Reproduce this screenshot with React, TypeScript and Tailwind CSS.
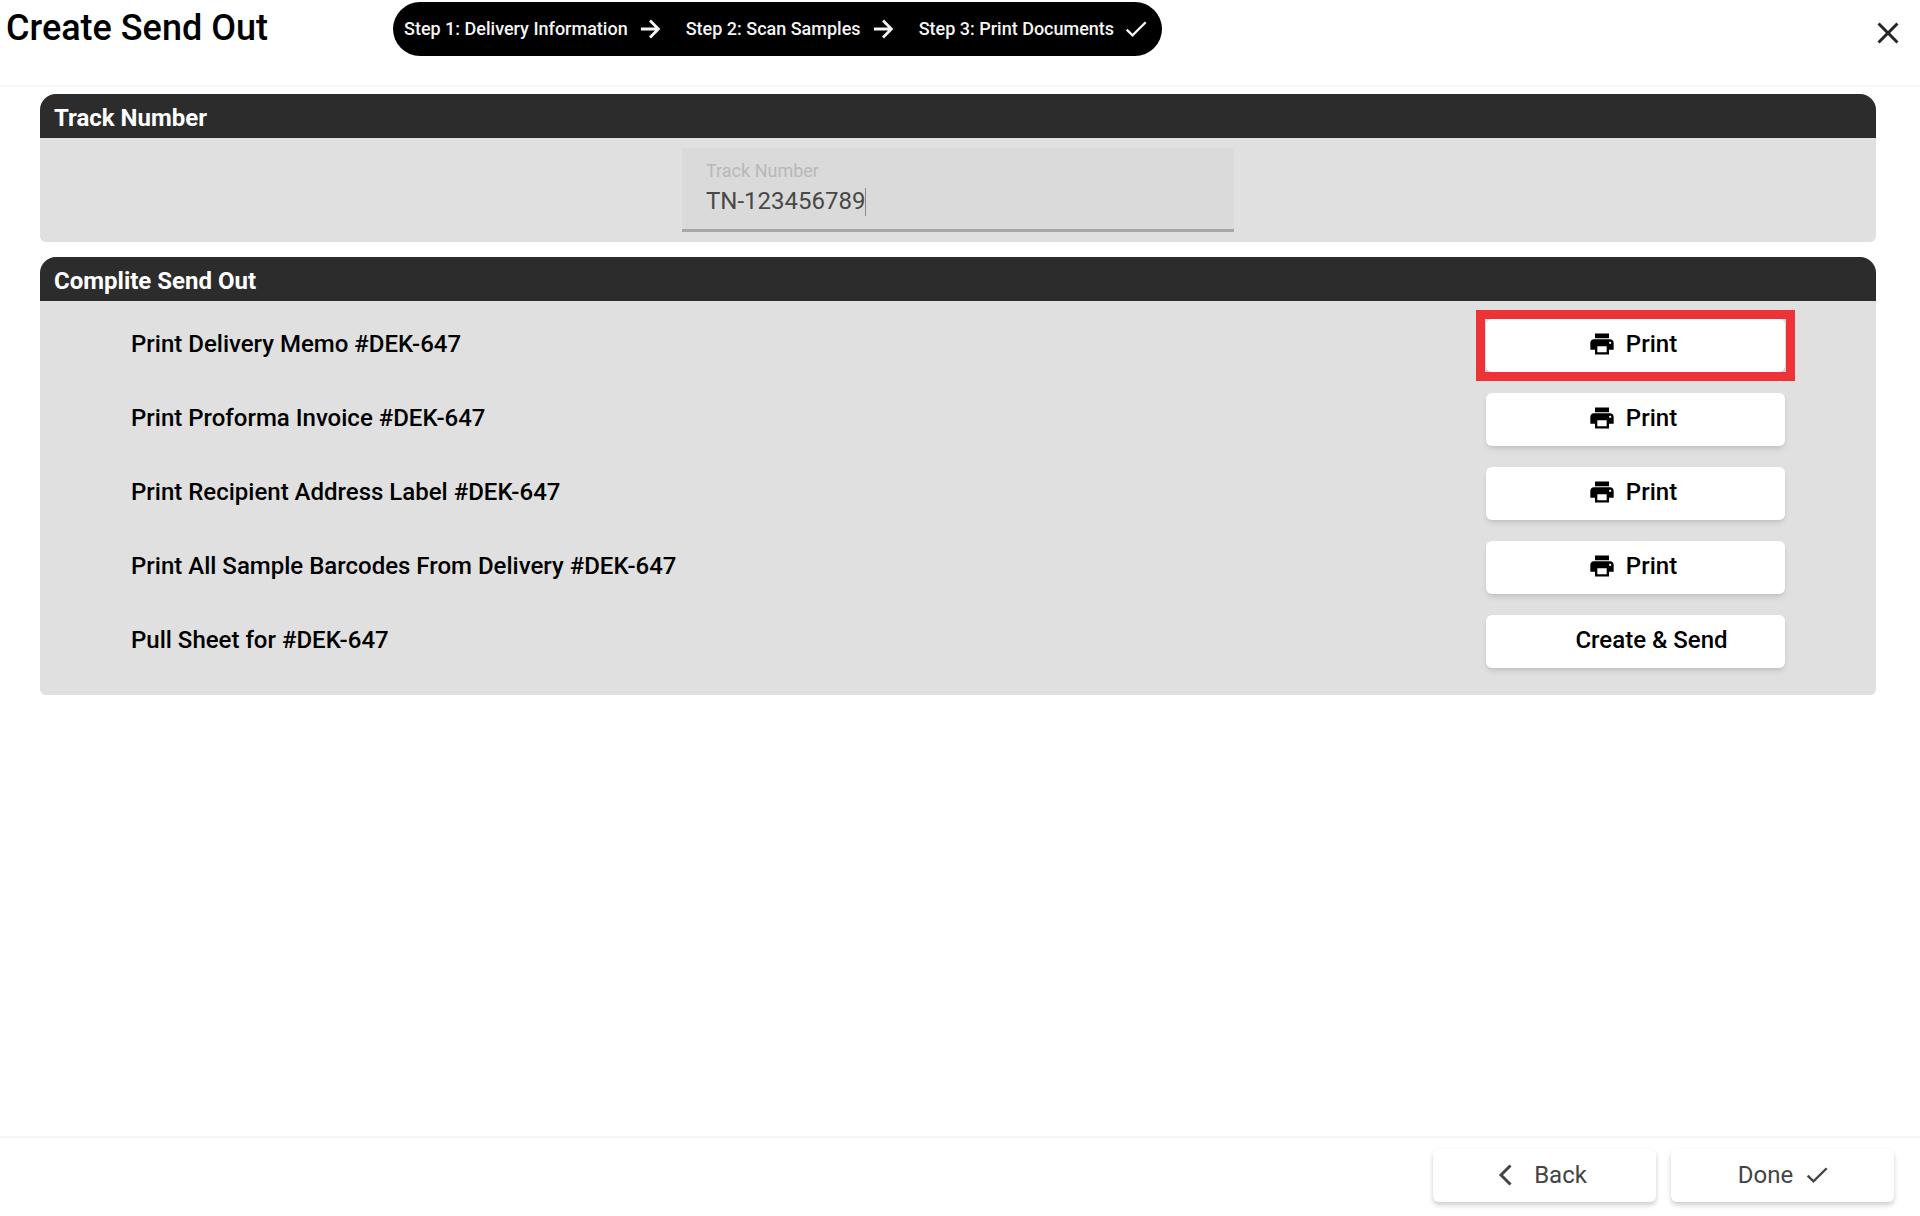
import { MdClose, MdPrint } from "react-icons/md";

const steps = [
    { label: "Step 1: Delivery Information", done: false },
    { label: "Step 2: Scan Samples", done: false },
    { label: "Step 3: Print Documents", done: true },
];

const documents = [
    { label: "Print Delivery Memo #DEK-647", action: "Print", active: true },
    { label: "Print Proforma Invoice #DEK-647", action: "Print" },
    { label: "Print Recipient Address Label #DEK-647", action: "Print" },
    { label: "Print All Sample Barcodes From Delivery #DEK-647", action: "Print" },
    { label: "Pull Sheet for #DEK-647", action: "Create & Send" },
];

const iconPaths = {
    arrow: "M4.2 12H19M12 4.8l7.2 7.2-7.2 7.2",
    check: "M4 12.5l5 5L20.3 6.2",
    back: "M14.5 2.5L5 12l9.5 9.5",
};

function Icon({ name, className }: { name: keyof typeof iconPaths; className: string }) {
    return (
        <svg viewBox="0 0 24 24" fill="none" stroke="currentColor" className={className} aria-hidden="true">
            <path d={iconPaths[name]} />
        </svg>
    );
}

function Header() {
    return (
        <header className="flex h-[87px] items-start border-b-2 border-neutral-100">
            <h1 className="w-[393px] shrink-0 pt-1 pl-[6px] text-4xl leading-12 font-medium">Create Send Out</h1>
            <ol className="mt-[2px] flex h-[54px] items-center rounded-full bg-black pr-3 pl-[11px] text-lg font-medium text-neutral-100">
                {steps.map((step) => (
                    <li key={step.label} className="flex items-center">
                        <span className="whitespace-nowrap">{step.label}</span>
                        {step.done ? (
                            <Icon name="check" className="ml-2 size-7 stroke-2" />
                        ) : (
                            <Icon name="arrow" className="mr-[22px] ml-2 size-7 stroke-[2.4]" />
                        )}
                    </li>
                ))}
            </ol>
            <button aria-label="Close" className="mt-[15px] mr-[14px] ml-auto text-neutral-800">
                <MdClose className="size-9" />
            </button>
        </header>
    );
}

function Card({ title, children }: { title: string; children: React.ReactNode }) {
    return (
        <section className="overflow-hidden rounded-t-2xl rounded-b-md bg-[#e0e0e0]">
            <h2 className="h-11 bg-[#2c2c2c] pl-[14px] text-2xl leading-12 font-bold text-white">{title}</h2>
            {children}
        </section>
    );
}

function DocumentRow({ label, action, active }: { label: string; action: string; active?: boolean }) {
    return (
        <li className="flex h-[53px] items-center justify-between">
            <span className="pb-1 text-2xl font-medium">{label}</span>
            <div className="relative">
                <button className="flex h-[53px] w-[299px] items-center justify-center rounded-md bg-white pr-[6px] pb-1 text-2xl font-medium shadow-md">
                    <span className="mr-[10px] size-7">{action === "Print" && <MdPrint className="size-7" />}</span>
                    {action}
                </button>
                {active && <div className="pointer-events-none absolute -inset-x-[10px] -inset-y-[9px] border-[9px] border-[#ee3338]"></div>}
            </div>
        </li>
    );
}

export default function App() {
    return (
        <div className="flex min-h-screen flex-col bg-white font-[Roboto,sans-serif] text-black">
            <Header />
            <main className="flex flex-1 flex-col gap-[15px] pt-[7px] pr-11 pl-10">
                <Card title="Track Number">
                    <div className="flex justify-center py-[10px]">
                        <div className="relative h-[84px] w-[552px] border-b-3 border-[#a8a8a8] bg-[#dadada] px-6 pt-[11px]">
                            <label htmlFor="track" className="block text-lg leading-6 text-[#b8b8b8]">Track Number</label>
                            <input id="track" defaultValue="TN-123456789" className="block h-9 w-full bg-transparent text-2xl text-[#484848] outline-none" />
                            {/* text cursor */}
                            <div className="absolute top-10 left-[183px] h-7 w-px bg-[#888]"></div>
                        </div>
                    </div>
                </Card>
                <Card title="Complite Send Out">
                    <ul className="flex flex-col gap-[21px] px-[91px] pt-[18px] pb-[27px]">
                        {documents.map((doc) => (
                            <DocumentRow key={doc.label} {...doc} />
                        ))}
                    </ul>
                </Card>
            </main>
            <footer className="flex h-20 justify-end gap-[15px] border-t-2 border-neutral-100 pt-[11px] pr-[26px] text-2xl text-[#444]">
                <button className="flex h-[53px] w-[223px] items-center justify-center rounded-md bg-white pr-[6px] pb-[2px] shadow-[0_3px_5px_rgba(0,0,0,0.2)]">
                    <Icon name="back" className="mr-[14px] size-6 stroke-3" />
                    Back
                </button>
                <button className="flex h-[53px] w-[223px] items-center justify-center rounded-md bg-white pb-[2px] pl-1 shadow-[0_3px_5px_rgba(0,0,0,0.2)]">
                    Done
                    <Icon name="check" className="ml-[10px] size-7 stroke-2" />
                </button>
            </footer>
        </div>
    );
}
